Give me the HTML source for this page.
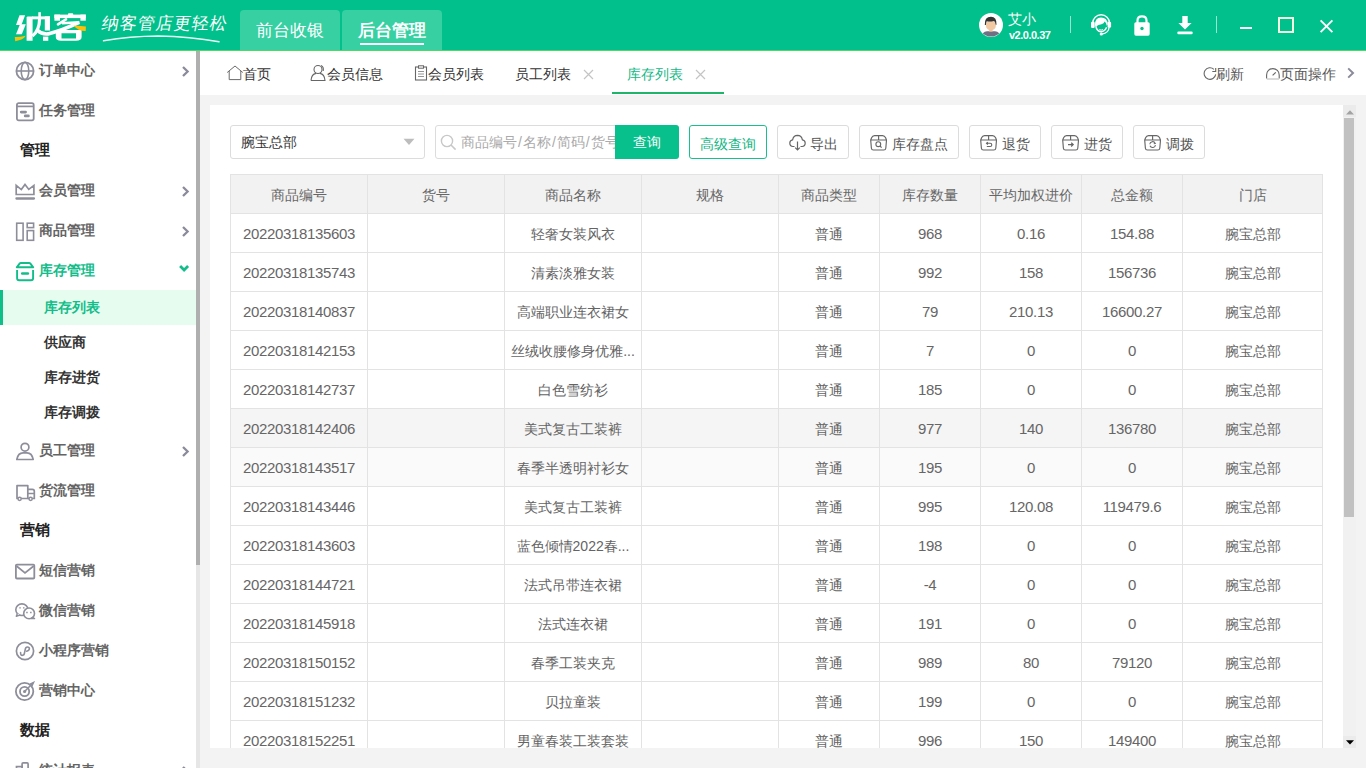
<!DOCTYPE html>
<html><head><meta charset="utf-8">
<style>
*{margin:0;padding:0;box-sizing:border-box}
html,body{width:1366px;height:768px;overflow:hidden;background:#f3f3f3;font-family:"Liberation Sans",sans-serif;font-size:14px;color:#333}
.abs{position:absolute}
#hdr{position:absolute;left:0;top:0;width:1366px;height:51px;background:#02c08b;border-bottom:1px solid #4cd964}
.htab{position:absolute;top:10px;height:40px;width:100px;background:#36d0a2;border-radius:4px 4px 0 0;color:#fff;font-size:17px;text-align:center;line-height:42px}
#side{position:absolute;left:0;top:51px;width:196px;height:717px;background:#fff;overflow:hidden}
#sidein{position:absolute;left:0;top:-51px;width:196px;height:820px}
.mt{position:absolute;left:39px;height:18px;line-height:18px;font-size:14px;font-weight:bold;white-space:nowrap}
.grp{position:absolute;left:20px;height:20px;line-height:20px;font-size:15px;font-weight:bold;color:#222}
.sub{position:absolute;left:44px;height:18px;line-height:18px;font-weight:bold;font-size:14px}
#sbar{position:absolute;left:196px;top:51px;width:4px;height:717px;background:#e6e6e6}
#sthumb{position:absolute;left:196px;top:51px;width:4px;height:514px;background:#afafaf}
#tabs{position:absolute;left:200px;top:51px;width:1166px;height:44px;background:#fff}
.tb{position:absolute;top:14px;height:18px;line-height:18px;font-size:14px;color:#333;white-space:nowrap}
#panel{position:absolute;left:210px;top:105px;width:1146px;height:643px;background:#fff;overflow:hidden}
.btn{position:absolute;top:20px;height:34px;border:1px solid #dcdcdc;border-radius:3px;background:#fff;color:#555;font-size:14px;white-space:nowrap}
.btn span{position:absolute;top:9px;line-height:18px}
i{font-style:normal;margin:0 1px}
td.num{font-size:15px;letter-spacing:-0.35px;padding-top:0;color:#666}
.btn svg{position:absolute;top:8px}
table{position:absolute;left:20px;top:69px;border-collapse:collapse;table-layout:fixed;width:1093px}
td,th{border:1px solid #e3e3e3;height:39px;padding:4px 0 0 0;text-align:center;font-weight:normal;color:#646464;font-size:14px;white-space:nowrap;overflow:hidden}
th{background:#f2f2f2;color:#666}
</style></head><body>
<div id="hdr">
  <svg class="abs" style="left:0;top:0" width="95" height="47" viewBox="0 0 95 47">
    <g fill="#fff">
    <polygon points="19.5,15.3 25.1,15.3 21.4,25.1 16,25.1"/>
    <polygon points="20,24.2 25.8,24.2 21.8,34.3 16,34.3"/>
    <polygon points="27.4,16.4 32.6,16.4 32.6,40.8 26.6,40.8 26.6,17.4"/>
    <rect x="32" y="16.4" width="18" height="2.9"/>
    <rect x="44.8" y="16.4" width="5.2" height="14.1"/>
    <rect x="38.3" y="12.2" width="2.6" height="7.6"/>
    <rect x="43" y="36.6" width="5.3" height="4.2"/>
    <rect x="68" y="13.2" width="5.2" height="2.5" rx="0.8"/>
    <rect x="54.4" y="14.6" width="31.4" height="3.5"/>
    <rect x="54.4" y="14.6" width="5.6" height="6.1"/>
    <rect x="80.4" y="14.6" width="5.4" height="6.1"/>
    <path fill-rule="evenodd" d="M55.8 33 Q55.8 30 59 30 L81.6 30 L81.6 37 Q81.6 40.8 76 40.8 L61 40.8 Q55.8 40.8 55.8 37 Z M61.5 33.3 L76 33.3 L76 38.5 L61.5 38.5 Z"/>
    </g>
    <g fill="none" stroke="#fff">
    <path d="M39.6 19 Q39.4 30.5 32.4 36" stroke-width="3.2"/>
    <path d="M37.4 30.2 Q42 34.6 48 33.9 Q62 30.5 79.2 22.4" stroke-width="3.6"/>
    <path d="M58 24.4 L66 19.3" stroke-width="2.6" stroke-linecap="round"/>
    <path d="M62 23.3 L79.4 22.3" stroke-width="2.6"/>
    </g>
    <path d="M14.8 37 Q20 37.2 25.6 35.8 Q23.5 40 15.2 41.2 Z" fill="#fcbf0a"/>
    <path d="M73.5 25.8 Q79 25.6 85.9 26.4 L85.7 31 Q79 31.4 73.5 25.8 Z" fill="#fcbf0a"/>
  </svg>
  <div class="abs" style="left:102px;top:13px;font-size:17px;line-height:22px;color:#fff;font-family:'Liberation Serif',serif;letter-spacing:1px;transform:skewX(-10deg)">纳客管店更轻松</div>
  <svg class="abs" style="left:100px;top:33px" width="125" height="10" viewBox="0 0 125 10"><path d="M3.5 7.8 Q30 3.2 58 3 Q90 3.5 119 8.8" fill="none" stroke="#e8fff5" stroke-width="1.4" stroke-linecap="round"/></svg>
  <div class="htab" style="left:240px">前台收银</div>
  <div class="htab" style="left:342px;font-weight:bold">后台管理<div class="abs" style="left:18px;top:33px;width:64px;height:2px;background:#fff;line-height:0"></div></div>

  <svg class="abs" style="left:979px;top:13px" width="24" height="24" viewBox="0 0 24 24"><circle cx="12" cy="12" r="12" fill="#fff"/><clipPath id="av"><circle cx="12" cy="12" r="11.6"/></clipPath><g clip-path="url(#av)"><path d="M2.5 24 Q3 18.6 8 18.2 L16 18.2 Q21 18.6 21.5 24 Z" fill="#6f7083"/><rect x="10.2" y="15" width="3.4" height="3.6" fill="#f2c29e"/><ellipse cx="11.9" cy="12.4" rx="5" ry="5" fill="#f2c8a2"/><path d="M5.8 12 Q5.3 3.8 12 3.8 Q17.9 3.9 17.5 11.8 L16.7 11.8 Q16.3 8.6 15 7.9 Q11 8.9 7.7 8.3 Q7.1 9.8 6.9 12 Z" fill="#333"/></g></svg>
  <div class="abs" style="left:1008px;top:10px;font-size:14px;line-height:18px;color:#fff">艾小</div>
  <div class="abs" style="left:1009px;top:29px;font-size:11px;line-height:13px;color:#fff;font-weight:bold;letter-spacing:-0.5px">v2.0.0.37</div>
  <div class="abs" style="left:1070px;top:16px;width:1px;height:17px;background:rgba(255,255,255,.6)"></div>
  <svg class="abs" style="left:1089px;top:13px" width="24" height="24" viewBox="0 0 24 24"><path d="M3.7 10.2 A8.4 8.4 0 0 1 20.5 10.2" fill="none" stroke="#fff" stroke-width="1.4"/><rect x="2" y="8.7" width="3.7" height="6.2" rx="1.2" fill="#fff"/><rect x="18.6" y="8.7" width="3.5" height="5.9" rx="1.2" fill="#fff"/><path d="M5.9 12.6 Q5.7 4.8 12 4.6 Q18.5 4.8 18.7 11.6 L17.8 12.8 Q17.2 9.6 15.6 8.6 Q15 10.8 12.5 11.2 Q9 11.6 7.2 13.4 Z" fill="#fff"/><path d="M6.8 13.2 Q7.8 18.6 12 18.7 Q15.8 18.5 17.6 14.2" fill="none" stroke="#fff" stroke-width="1.5"/><path d="M10.3 16.6 Q12.2 17.6 14.1 16.6" fill="none" stroke="#fff" stroke-width="1"/><path d="M20.2 14 Q19.6 20.2 13 21" fill="none" stroke="#fff" stroke-width="1.3"/><circle cx="12.3" cy="21" r="1.6" fill="#fff"/></svg>
  <svg class="abs" style="left:1133px;top:15px" width="18" height="22" viewBox="0 0 18 22"><path d="M4.5 8 L4.5 5.5 Q4.5 1.3 9 1.3 Q13.5 1.3 13.5 5.5 L13.5 8" fill="none" stroke="#fff" stroke-width="2.2"/><rect x="1.3" y="7.2" width="15.4" height="13.5" rx="1.6" fill="#fff"/><circle cx="9" cy="13.5" r="1.7" fill="#02c08b"/></svg>
  <svg class="abs" style="left:1176px;top:15px" width="18" height="22" viewBox="0 0 18 22"><path d="M6.3 1 L11.7 1 L11.7 8 L15.6 8 L9 14.6 L2.4 8 L6.3 8 Z" fill="#fff"/><rect x="1.3" y="16.6" width="15.4" height="2.7" rx="1.2" fill="#fff"/></svg>
  <div class="abs" style="left:1216px;top:16px;width:1px;height:17px;background:rgba(255,255,255,.6)"></div>
  <div class="abs" style="left:1240px;top:27px;width:12px;height:2px;background:#fff"></div>
  <div class="abs" style="left:1278px;top:17px;width:16px;height:16px;border:2px solid #f3ffe0"></div>
  <svg class="abs" style="left:1319px;top:19px" width="15" height="15" viewBox="0 0 15 15"><path d="M1.6 1.4 L13.4 13.2 M13.4 1.4 L1.6 13.2" stroke="#fff" stroke-width="1.9"/></svg>
</div>

<div id="side"><div id="sidein">
<div class="mt" style="top:61px;color:#646464">订单中心</div><svg class="abs" style="left:15px;top:61px" width="21" height="21" viewBox="0 0 21 21"><circle cx="10" cy="10" r="8.6" fill="none" stroke="#8e8e9b" stroke-width="1.8"/><ellipse cx="10" cy="10" rx="3.8" ry="8.6" fill="none" stroke="#8e8e9b" stroke-width="1.6"/><line x1="1.5" y1="10" x2="18.5" y2="10" stroke="#8e8e9b" stroke-width="1.6"/></svg><svg class="abs" style="left:179px;top:63px" width="14" height="16" viewBox="0 0 14 16"><path d="M4 4 L8.6 8.5 L4 13" fill="none" stroke="#8a8a9a" stroke-width="2.3"/></svg>
<div class="mt" style="top:101px;color:#646464">任务管理</div><svg class="abs" style="left:15px;top:101px" width="21" height="21" viewBox="0 0 21 21"><rect x="1.9" y="2.1" width="16.8" height="17.3" rx="1.8" fill="none" stroke="#8e8e9b" stroke-width="1.8"/><line x1="2" y1="5.4" x2="18.6" y2="5.4" stroke="#8e8e9b" stroke-width="1.7"/><line x1="6.2" y1="11.1" x2="10.6" y2="11.1" stroke="#8e8e9b" stroke-width="2.7" stroke-linecap="round"/><line x1="10.2" y1="14.9" x2="13.4" y2="14.9" stroke="#8e8e9b" stroke-width="2.7" stroke-linecap="round"/></svg>
<div class="grp" style="top:140px">管理</div>
<div class="mt" style="top:181px;color:#646464">会员管理</div><svg class="abs" style="left:15px;top:181px" width="21" height="21" viewBox="0 0 21 21"><path d="M1.2 4.4 L6.3 8.6 L10 3.4 L13.8 8.4 L18.9 4.4 L18.9 13.5 L1.2 13.5 Z" fill="none" stroke="#8e8e9b" stroke-width="1.7" stroke-linejoin="miter"/><rect x="0.3" y="16.3" width="19.8" height="2.4" rx="1.1" fill="#8e8e9b"/></svg><svg class="abs" style="left:179px;top:183px" width="14" height="16" viewBox="0 0 14 16"><path d="M4 4 L8.6 8.5 L4 13" fill="none" stroke="#8a8a9a" stroke-width="2.3"/></svg>
<div class="mt" style="top:221px;color:#646464">商品管理</div><svg class="abs" style="left:15px;top:221px" width="21" height="21" viewBox="0 0 21 21"><rect x="1.7" y="2.2" width="6.4" height="17.1" fill="none" stroke="#8e8e9b" stroke-width="1.6"/><rect x="12.2" y="2.2" width="6.4" height="4.4" fill="none" stroke="#8e8e9b" stroke-width="1.6"/><rect x="12.2" y="9.6" width="6.4" height="9.7" fill="none" stroke="#8e8e9b" stroke-width="1.6"/></svg><svg class="abs" style="left:179px;top:223px" width="14" height="16" viewBox="0 0 14 16"><path d="M4 4 L8.6 8.5 L4 13" fill="none" stroke="#8a8a9a" stroke-width="2.3"/></svg>
<div class="mt" style="top:261px;color:#12bd8a">库存管理</div><svg class="abs" style="left:15px;top:261px" width="21" height="21" viewBox="0 0 21 21"><path d="M5.9 2.1 L14.1 2.1 Q14.9 2.1 15.4 2.7 L18.2 6.3 L1.8 6.3 L4.6 2.7 Q5.1 2.1 5.9 2.1 Z" fill="none" stroke="#12bd8a" stroke-width="2" stroke-linejoin="round"/><path d="M2.1 8.9 L2.1 17.3 Q2.1 19.3 4.1 19.3 L16.1 19.3 Q18.1 19.3 18.1 17.3 L18.1 8.9" fill="none" stroke="#12bd8a" stroke-width="1.9"/><line x1="7.2" y1="12.5" x2="12.9" y2="12.5" stroke="#12bd8a" stroke-width="2.5" stroke-linecap="round"/></svg>
<svg class="abs" style="left:176px;top:261px" width="16" height="12" viewBox="0 0 16 12"><path d="M4.1 5.1 L8.1 9.1 L12.1 5.1" fill="none" stroke="#12bd8a" stroke-width="2.8"/></svg>
<div class="abs" style="left:0;top:290px;width:196px;height:35px;background:#e6fcef"></div><div class="abs" style="left:0;top:290px;width:3px;height:35px;background:#0fbf87"></div>
<div class="sub" style="top:298px;color:#12bd8a">库存列表</div>
<div class="sub" style="top:333px;color:#333">供应商</div>
<div class="sub" style="top:368px;color:#333">库存进货</div>
<div class="sub" style="top:403px;color:#333">库存调拨</div>
<div class="mt" style="top:441px;color:#646464">员工管理</div><svg class="abs" style="left:15px;top:441px" width="21" height="21" viewBox="0 0 21 21"><circle cx="10" cy="6.2" r="3.9" fill="none" stroke="#8e8e9b" stroke-width="1.7"/><path d="M1.8 18.5 Q3 11.8 8 11.8 L12 11.8 Q17 11.8 18.2 18.5 Z" fill="none" stroke="#8e8e9b" stroke-width="1.7" stroke-linejoin="round"/></svg><svg class="abs" style="left:179px;top:443px" width="14" height="16" viewBox="0 0 14 16"><path d="M4 4 L8.6 8.5 L4 13" fill="none" stroke="#8a8a9a" stroke-width="2.3"/></svg>
<div class="mt" style="top:481px;color:#646464">货流管理</div><svg class="abs" style="left:15px;top:481px" width="21" height="21" viewBox="0 0 21 21"><path d="M2 4.6 L12.8 4.6 L12.8 17.5 L2 17.5 Z" fill="none" stroke="#8e8e9b" stroke-width="1.7" stroke-linejoin="round"/><path d="M12.8 8.3 L17.4 8.3 Q19.3 8.3 19.3 10.3 L19.3 17.5 L12.8 17.5" fill="none" stroke="#8e8e9b" stroke-width="1.7"/><line x1="13" y1="12.5" x2="19" y2="12.5" stroke="#8e8e9b" stroke-width="1.5"/><circle cx="4.6" cy="17.8" r="1.6" fill="#fff" stroke="#8e8e9b" stroke-width="1.5"/><circle cx="15.6" cy="17.8" r="1.6" fill="#fff" stroke="#8e8e9b" stroke-width="1.5"/></svg>
<div class="grp" style="top:520px">营销</div>
<div class="mt" style="top:561px;color:#646464">短信营销</div><svg class="abs" style="left:15px;top:561px" width="21" height="21" viewBox="0 0 21 21"><rect x="0.9" y="3.6" width="18.4" height="13.9" rx="1" fill="none" stroke="#8e8e9b" stroke-width="1.8"/><path d="M1.5 5 L10 11.8 L18.7 5" fill="none" stroke="#8e8e9b" stroke-width="1.7"/></svg>
<div class="mt" style="top:601px;color:#646464">微信营销</div><svg class="abs" style="left:15px;top:601px" width="21" height="21" viewBox="0 0 21 21"><ellipse cx="6.9" cy="8.7" rx="6.1" ry="5.8" fill="none" stroke="#8e8e9b" stroke-width="1.6"/><path d="M2.4 12.4 L1.3 15.3 L4.8 14.1" fill="#fff" stroke="#8e8e9b" stroke-width="1.4" stroke-linejoin="round"/><circle cx="14.1" cy="12.4" r="5.4" fill="#fff" stroke="#8e8e9b" stroke-width="1.6"/><path d="M17.6 16.2 L19.6 17.6 L16 17.6 Z" fill="#fff" stroke="#8e8e9b" stroke-width="1.3" stroke-linejoin="round"/><path d="M4.3 6.9 H5.8 M8 6.9 H9.5 M11.2 11.5 H12.7 M15.1 11.5 H16.6" stroke="#8e8e9b" stroke-width="1.3"/></svg>
<div class="mt" style="top:641px;color:#646464">小程序营销</div><svg class="abs" style="left:15px;top:641px" width="21" height="21" viewBox="0 0 21 21"><circle cx="10" cy="10" r="8.6" fill="none" stroke="#8e8e9b" stroke-width="1.7"/><path d="M5.6 11.6 Q5.4 14.6 7.6 14.3 Q9.3 14.1 9.6 11.3 L10.2 8.6 Q10.6 6 12.4 6 Q14.4 6 14.4 7.8 Q14.3 9.6 11.6 10.2" fill="none" stroke="#8e8e9b" stroke-width="1.6" stroke-linecap="round"/></svg>
<div class="mt" style="top:681px;color:#646464">营销中心</div><svg class="abs" style="left:15px;top:681px" width="21" height="21" viewBox="0 0 21 21"><circle cx="9.6" cy="10.5" r="8.7" fill="none" stroke="#8e8e9b" stroke-width="1.8"/><circle cx="9.6" cy="10.5" r="4.6" fill="none" stroke="#8e8e9b" stroke-width="1.8"/><circle cx="9.6" cy="10.5" r="1.6" fill="#8e8e9b"/><line x1="9.6" y1="10.5" x2="17.5" y2="2.5" stroke="#8e8e9b" stroke-width="1.6"/><path d="M15.5 2.8 L18.8 1.2 L17.2 4.6 Z" fill="#8e8e9b" stroke="#8e8e9b" stroke-width="1.2"/></svg>
<div class="grp" style="top:720px">数据</div>
<div class="mt" style="top:761px;color:#646464">统计报表</div><svg class="abs" style="left:15px;top:761px" width="21" height="21" viewBox="0 0 21 21"><rect x="1.5" y="5.6" width="5.6" height="14" fill="none" stroke="#8e8e9b" stroke-width="1.7"/><rect x="7.1" y="1.9" width="6" height="18" rx="1" fill="none" stroke="#8e8e9b" stroke-width="1.7"/></svg><svg class="abs" style="left:179px;top:763px" width="14" height="16" viewBox="0 0 14 16"><path d="M4 4 L8.6 8.5 L4 13" fill="none" stroke="#8a8a9a" stroke-width="2.3"/></svg>
</div></div>
<div id="sbar"></div><div id="sthumb"></div>

<div id="tabs">
  <svg class="abs" style="left:26px;top:14px" width="18" height="16" viewBox="0 0 18 16"><path d="M1.2 7.5 L9 1 L16.8 7.5 M3.2 6 L3.2 14.6 L14.8 14.6 L14.8 6" fill="none" stroke="#6a6a6a" stroke-width="1"/></svg>
  <div class="tb" style="left:43px">首页</div>
  <svg class="abs" style="left:110px;top:13px" width="18" height="18" viewBox="0 0 18 18"><circle cx="8" cy="5.5" r="4" fill="none" stroke="#666" stroke-width="1.1"/><path d="M1 16.5 Q1.5 10.2 6 9.4 M10 9.4 Q14.5 10.2 15 16.5 L1 16.5 M11 1.6 Q14 2.8 13.2 7" fill="none" stroke="#666" stroke-width="1.1"/></svg>
  <div class="tb" style="left:127px">会员信息</div>
  <svg class="abs" style="left:214px;top:14px" width="14" height="16" viewBox="0 0 14 16"><rect x="1.5" y="2" width="11" height="13" fill="none" stroke="#666" stroke-width="1.1"/><rect x="4.5" y="0.8" width="5" height="2.4" fill="#fff" stroke="#666" stroke-width="1"/><path d="M4 6.5 H10 M4 9 H10 M4 11.5 H10" stroke="#888" stroke-width="0.9"/></svg>
  <div class="tb" style="left:228px">会员列表</div>
  <div class="tb" style="left:315px">员工列表</div>
  <svg class="abs" style="left:383px;top:18px" width="11" height="11" viewBox="0 0 11 11"><path d="M1 1 L10 10 M10 1 L1 10" stroke="#c4c4c4" stroke-width="1.2"/></svg>
  <div class="tb" style="left:427px;color:#14b886">库存列表</div>
  <svg class="abs" style="left:495px;top:18px" width="11" height="11" viewBox="0 0 11 11"><path d="M1 1 L10 10 M10 1 L1 10" stroke="#c4c4c4" stroke-width="1.2"/></svg>
  <div class="abs" style="left:412px;top:41px;width:112px;height:2px;background:#20b46a"></div>

  <svg class="abs" style="left:1003px;top:15px" width="16" height="16" viewBox="0 0 16 16"><path d="M12.7 8.4 A5.8 5.8 0 1 1 10.9 3.3" fill="none" stroke="#666" stroke-width="1.1"/><path d="M9.3 5.5 L12.7 5.5 L12.7 2.1" fill="none" stroke="#666" stroke-width="1.1"/></svg>
  <div class="tb" style="left:1016px;color:#555">刷新</div>
  <svg class="abs" style="left:1065px;top:15px" width="16" height="16" viewBox="0 0 16 16"><path d="M1.6 12.4 L1.6 8.9 A6.3 6.3 0 0 1 14.2 8.9 L14.2 12.4" fill="none" stroke="#666" stroke-width="1.1"/><path d="M1.8 13 L14 13" stroke="#cfcfcf" stroke-width="1.5"/><path d="M7.6 9.4 L10.8 6.4" stroke="#666" stroke-width="1.2"/></svg>
  <div class="tb" style="left:1080px;color:#555">页面操作</div>
  <svg class="abs" style="left:1144px;top:15px" width="14" height="14" viewBox="0 0 14 14"><path d="M4.2 2.4 L9 7 L4.2 11.6" fill="none" stroke="#8a8a9a" stroke-width="2"/></svg>
</div>

<div id="panel">
  <div class="abs" style="left:20px;top:20px;width:195px;height:34px;border:1px solid #dcdcdc;border-radius:3px"></div>
  <div class="abs" style="left:31px;top:28px;line-height:18px;color:#333">腕宝总部</div>
  <svg class="abs" style="left:193px;top:33px" width="12" height="8" viewBox="0 0 12 8"><path d="M0.5 0.8 L11.5 0.8 L6 7 Z" fill="#bdbdbd"/></svg>

  <div class="abs" style="left:225px;top:20px;width:182px;height:34px;border:1px solid #dcdcdc;border-radius:3px 0 0 3px;overflow:hidden">
    <svg class="abs" style="left:4px;top:8px" width="17" height="17" viewBox="0 0 17 17"><circle cx="7" cy="7" r="5.6" fill="none" stroke="#c8c8c8" stroke-width="1.4"/><path d="M11 11 L15.6 15.6" stroke="#c8c8c8" stroke-width="1.6"/></svg>
    <div class="abs" style="left:25px;top:7px;line-height:18px;color:#aaa;white-space:nowrap">商品编号<i>/</i>名称<i>/</i>简码<i>/</i>货号</div>
  </div>
  <div class="abs" style="left:405px;top:20px;width:64px;height:34px;background:#07c08c;border-radius:0 3px 3px 0;color:#fff;text-align:center;line-height:34px">查询</div>

  <div class="btn" style="left:479px;width:78px;border-color:#1ac08c;color:#10b583"><span style="left:10px">高级查询</span></div>
  <div class="btn" style="left:567px;width:72px"><svg style="left:11px" width="17" height="17" viewBox="0 0 17 17"><path d="M5.5 12.5 L4 12.5 Q0.8 12.3 0.8 9 Q0.9 6.3 3.6 5.8 Q4.4 1.4 8.5 1.3 Q12.6 1.4 13.4 5.8 Q16.1 6.3 16.2 9 Q16.2 12.3 13 12.5 L11.5 12.5" fill="none" stroke="#666" stroke-width="1.2"/><path d="M8.5 7.5 L8.5 16 M6.2 13.6 L8.5 16 L10.8 13.6" fill="none" stroke="#666" stroke-width="1.2"/></svg><span style="left:32px">导出</span></div>
  <div class="btn" style="left:649px;width:100px"><svg style="left:10px" width="17" height="17" viewBox="0 0 17 17"><path d="M4.5 1.6 L12.6 1.6 Q14.6 1.6 15.6 3.8 L16.5 6 L15.8 14.2 Q15.6 16 13.8 16 L3.4 16 Q1.6 16 1.4 14.2 L0.7 6 L1.6 3.8 Q2.5 1.6 4.5 1.6 Z M0.9 6 L16.3 6 M8.6 1.8 L8.6 6" fill="none" stroke="#666" stroke-width="1.15" stroke-linejoin="round"/><circle cx="8.3" cy="10.2" r="2.4" fill="none" stroke="#666" stroke-width="1.1"/><path d="M10 12 L11.6 13.6" stroke="#666" stroke-width="1.2"/></svg><span style="left:32px">库存盘点</span></div>
  <div class="btn" style="left:759px;width:72px"><svg style="left:10px" width="17" height="17" viewBox="0 0 17 17"><path d="M4.5 1.6 L12.6 1.6 Q14.6 1.6 15.6 3.8 L16.5 6 L15.8 14.2 Q15.6 16 13.8 16 L3.4 16 Q1.6 16 1.4 14.2 L0.7 6 L1.6 3.8 Q2.5 1.6 4.5 1.6 Z M0.9 6 L16.3 6 M8.6 1.8 L8.6 6" fill="none" stroke="#666" stroke-width="1.15" stroke-linejoin="round"/><path d="M6.6 9.3 L10.2 9.3 Q11.8 9.3 11.8 10.9 Q11.8 12.5 10.2 12.5 L6.8 12.5 M7.8 8.1 L6.5 9.3 L7.8 10.5" fill="none" stroke="#666" stroke-width="1.1"/></svg><span style="left:32px">退货</span></div>
  <div class="btn" style="left:841px;width:72px"><svg style="left:10px" width="17" height="17" viewBox="0 0 17 17"><path d="M4.5 1.6 L12.6 1.6 Q14.6 1.6 15.6 3.8 L16.5 6 L15.8 14.2 Q15.6 16 13.8 16 L3.4 16 Q1.6 16 1.4 14.2 L0.7 6 L1.6 3.8 Q2.5 1.6 4.5 1.6 Z M0.9 6 L16.3 6 M8.6 1.8 L8.6 6" fill="none" stroke="#666" stroke-width="1.15" stroke-linejoin="round"/><path d="M6 10.6 L11.2 10.6 M9.2 8.7 L11.2 10.6 L9.2 12.5" fill="none" stroke="#666" stroke-width="1.2"/></svg><span style="left:32px">进货</span></div>
  <div class="btn" style="left:923px;width:72px"><svg style="left:10px" width="17" height="17" viewBox="0 0 17 17"><path d="M4.5 1.6 L12.6 1.6 Q14.6 1.6 15.6 3.8 L16.5 6 L15.8 14.2 Q15.6 16 13.8 16 L3.4 16 Q1.6 16 1.4 14.2 L0.7 6 L1.6 3.8 Q2.5 1.6 4.5 1.6 Z M0.9 6 L16.3 6 M8.6 1.8 L8.6 6" fill="none" stroke="#666" stroke-width="1.15" stroke-linejoin="round"/><path d="M5.8 10.3 A2.8 2.8 0 0 1 11.2 9.4 M11.4 10.9 A2.8 2.8 0 0 1 6 11.8 M10.4 8.2 L11.3 9.5 L9.8 9.8" fill="none" stroke="#666" stroke-width="1.05"/></svg><span style="left:32px">调拨</span></div>

  <table>
<colgroup><col style="width:137px"><col style="width:137px"><col style="width:137px"><col style="width:137px"><col style="width:101px"><col style="width:101px"><col style="width:101px"><col style="width:101px"><col style="width:140px"></colgroup>
<tr><th>商品编号</th><th>货号</th><th>商品名称</th><th>规格</th><th>商品类型</th><th>库存数量</th><th>平均加权进价</th><th>总金额</th><th>门店</th></tr>
<tr><td class="num">20220318135603</td><td></td><td>轻奢女装风衣</td><td></td><td>普通</td><td class="num">968</td><td class="num">0.16</td><td class="num">154.88</td><td>腕宝总部</td></tr>
<tr><td class="num">20220318135743</td><td></td><td>清素淡雅女装</td><td></td><td>普通</td><td class="num">992</td><td class="num">158</td><td class="num">156736</td><td>腕宝总部</td></tr>
<tr><td class="num">20220318140837</td><td></td><td>高端职业连衣裙女</td><td></td><td>普通</td><td class="num">79</td><td class="num">210.13</td><td class="num">16600.27</td><td>腕宝总部</td></tr>
<tr><td class="num">20220318142153</td><td></td><td>丝绒收腰修身优雅...</td><td></td><td>普通</td><td class="num">7</td><td class="num">0</td><td class="num">0</td><td>腕宝总部</td></tr>
<tr><td class="num">20220318142737</td><td></td><td>白色雪纺衫</td><td></td><td>普通</td><td class="num">185</td><td class="num">0</td><td class="num">0</td><td>腕宝总部</td></tr>
<tr style="background:#f5f5f5"><td class="num">20220318142406</td><td></td><td>美式复古工装裤</td><td></td><td>普通</td><td class="num">977</td><td class="num">140</td><td class="num">136780</td><td>腕宝总部</td></tr>
<tr style="background:#fafafa"><td class="num">20220318143517</td><td></td><td>春季半透明衬衫女</td><td></td><td>普通</td><td class="num">195</td><td class="num">0</td><td class="num">0</td><td>腕宝总部</td></tr>
<tr><td class="num">20220318143446</td><td></td><td>美式复古工装裤</td><td></td><td>普通</td><td class="num">995</td><td class="num">120.08</td><td class="num">119479.6</td><td>腕宝总部</td></tr>
<tr><td class="num">20220318143603</td><td></td><td>蓝色倾情2022春...</td><td></td><td>普通</td><td class="num">198</td><td class="num">0</td><td class="num">0</td><td>腕宝总部</td></tr>
<tr><td class="num">20220318144721</td><td></td><td>法式吊带连衣裙</td><td></td><td>普通</td><td class="num">-4</td><td class="num">0</td><td class="num">0</td><td>腕宝总部</td></tr>
<tr><td class="num">20220318145918</td><td></td><td>法式连衣裙</td><td></td><td>普通</td><td class="num">191</td><td class="num">0</td><td class="num">0</td><td>腕宝总部</td></tr>
<tr><td class="num">20220318150152</td><td></td><td>春季工装夹克</td><td></td><td>普通</td><td class="num">989</td><td class="num">80</td><td class="num">79120</td><td>腕宝总部</td></tr>
<tr><td class="num">20220318151232</td><td></td><td>贝拉童装</td><td></td><td>普通</td><td class="num">199</td><td class="num">0</td><td class="num">0</td><td>腕宝总部</td></tr>
<tr><td class="num">20220318152251</td><td></td><td>男童春装工装套装</td><td></td><td>普通</td><td class="num">996</td><td class="num">150</td><td class="num">149400</td><td>腕宝总部</td></tr>
  </table>

  <div class="abs" style="left:1133px;top:0;width:13px;height:643px;background:#f1f1f1"></div>
  <div class="abs" style="left:1133px;top:0;width:13px;height:12px;background:#ebebeb"></div>
  <svg class="abs" style="left:1136px;top:5px" width="8" height="5" viewBox="0 0 8 5"><path d="M0 4.5 L4 0.3 L8 4.5 Z" fill="#a3a3a3"/></svg>
  <div class="abs" style="left:1134px;top:13px;width:10px;height:399px;background:#c1c1c1"></div>
  <div class="abs" style="left:1133px;top:631px;width:13px;height:12px;background:#ebebeb"></div>
  <svg class="abs" style="left:1136px;top:635px" width="8" height="5" viewBox="0 0 8 5"><path d="M0 0.3 L8 0.3 L4 4.5 Z" fill="#000"/></svg>
</div>
</body></html>
